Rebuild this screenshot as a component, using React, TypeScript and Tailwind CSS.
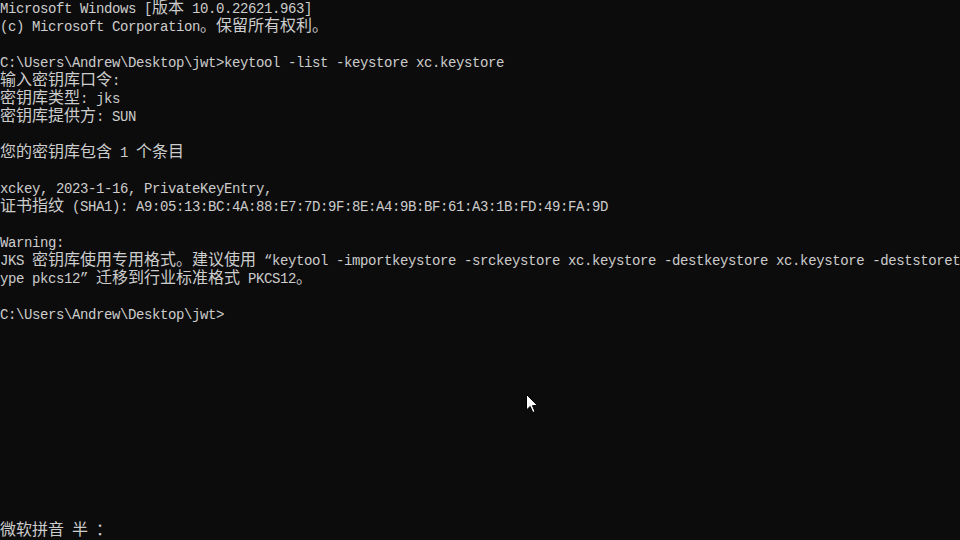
const lines: string[] = [
  'Microsoft Windows [版本 10.0.22621.963]',
  '(c) Microsoft Corporation。保留所有权利。',
  '',
  'C:\\Users\\Andrew\\Desktop\\jwt>keytool -list -keystore xc.keystore',
  '输入密钥库口令:',
  '密钥库类型: jks',
  '密钥库提供方: SUN',
  '',
  '您的密钥库包含 1 个条目',
  '',
  'xckey, 2023-1-16, PrivateKeyEntry,',
  '证书指纹 (SHA1): A9:05:13:BC:4A:88:E7:7D:9F:8E:A4:9B:BF:61:A3:1B:FD:49:FA:9D',
  '',
  'Warning:',
  'JKS 密钥库使用专用格式。建议使用 “keytool -importkeystore -srckeystore xc.keystore -destkeystore xc.keystore -deststoret',
  'ype pkcs12” 迁移到行业标准格式 PKCS12。',
  '',
  'C:\\Users\\Andrew\\Desktop\\jwt>',
];

// split a line into runs of half-width and full-width characters
function runs(text: string) {
  const out: { wide: boolean; s: string }[] = [];
  for (const ch of text) {
    const wide = ch.charCodeAt(0) >= 0x2e80;
    const last = out[out.length - 1];
    if (last && last.wide === wide) last.s += ch;
    else out.push({ wide, s: ch });
  }
  return out;
}

function Line({ text }: { text: string }) {
  return (
    <div className="h-[18px] leading-[18px] whitespace-pre">
      {runs(text).map((r, i) =>
        r.wide ? (
          <span
            key={i}
            className="font-['Noto_Sans_CJK_SC',sans-serif] text-[16px] tracking-normal leading-[12px]"
          >
            {r.s}
          </span>
        ) : (
          <span key={i}>{r.s}</span>
        )
      )}
    </div>
  );
}

export default function App() {
  return (
    <div className="relative w-[960px] h-[540px] overflow-hidden bg-[#0c0c0c] text-[#cccccc] font-['Liberation_Mono',monospace] text-[14px] tracking-[-0.4px] flex flex-col">
      {lines.map((l, i) => (
        <Line key={i} text={l} />
      ))}
      <div className="mt-auto">
        <Line text="微软拼音 半 ：" />
      </div>

      {/* mouse pointer */}
      <svg className="absolute left-[526px] top-[394px]" width="13" height="20" viewBox="0 0 13 20">
        <path d="M0.5 0.5 L0.5 16 L4.2 12.4 L6.8 18.6 L9 17.6 L6.5 11.6 L11.5 11.6 Z" fill="#ffffff" stroke="#000000" strokeWidth="1" />
      </svg>
    </div>
  );
}
